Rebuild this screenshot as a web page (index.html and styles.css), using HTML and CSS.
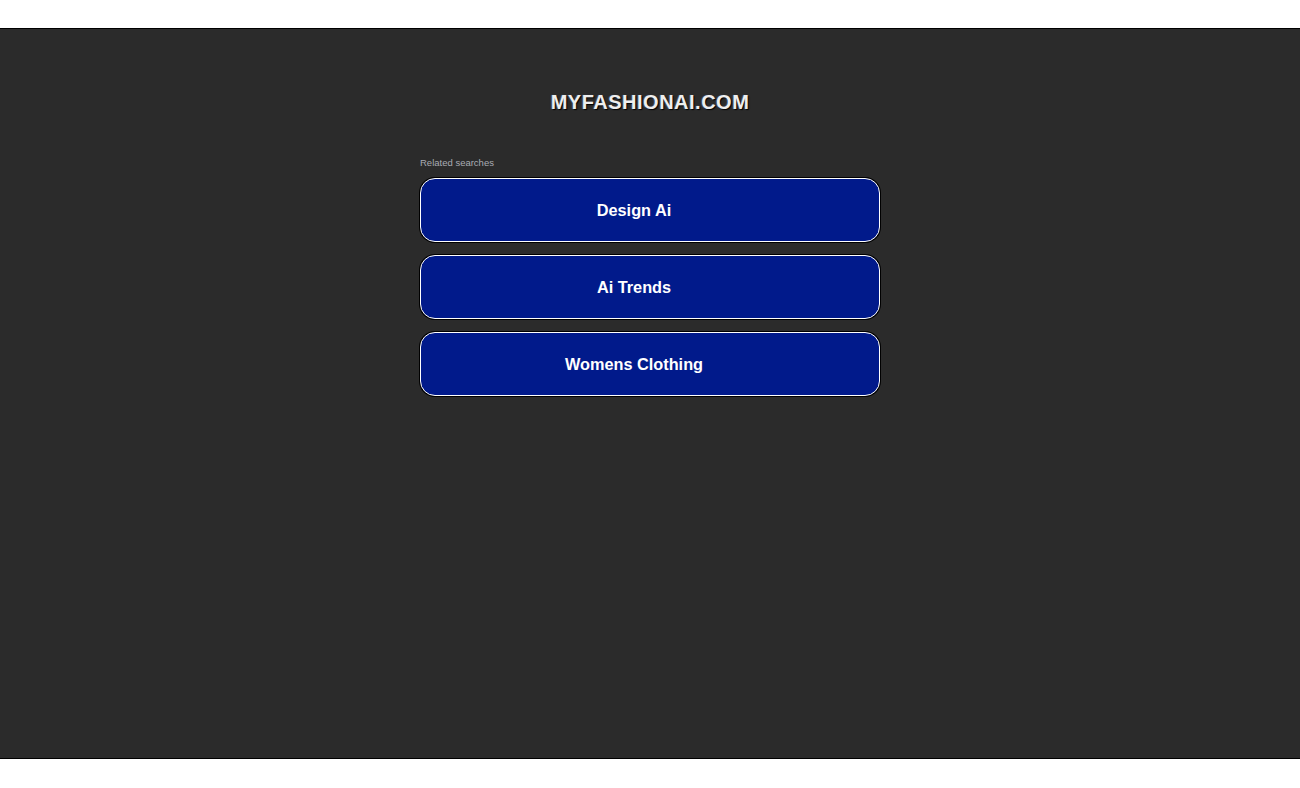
FILE: index.html
```html
<!DOCTYPE html>
<html>
<head>
<meta charset="utf-8">
<link rel="stylesheet" href="styles.css">
</head>
<body>
<div class="top-gap"></div>
<main class="stage">
  <h1 class="domain">MYFASHIONAI.COM</h1>
  <section class="related">
    <div class="related-label">Related searches</div>
    <a class="search-btn" href="#">Design Ai</a>
    <a class="search-btn" href="#">Ai Trends</a>
    <a class="search-btn" href="#">Womens Clothing</a>
  </section>
</main>
</body>
</html>
```

FILE: styles.css
```css
html, body {
  margin: 0;
  padding: 0;
  background: #ffffff;
  font-family: "Liberation Sans", Arial, sans-serif;
}
.top-gap {
  height: 28px;
}
.stage {
  box-sizing: border-box;
  height: 731px;
  background: #2b2b2b;
  border-top: 1px solid #000;
  border-bottom: 1px solid #000;
  display: flex;
  flex-direction: column;
  align-items: center;
  padding-top: 61px;
}
.domain {
  margin: 0;
  font-size: 20px;
  font-weight: bold;
  letter-spacing: 0.5px;
  color: #eeeeee;
  text-shadow: 1px 1px 1px #000, -1px 0 1px rgba(120,160,255,0.35);
  line-height: 24px;
}
.related {
  width: 460px;
  margin-top: 43px;
  display: flex;
  flex-direction: column;
  gap: 13px;
}
.related-label {
  font-size: 9.5px;
  color: #a9acb3;
  line-height: 12px;
  margin-bottom: -4px;
}
.search-btn {
  box-sizing: border-box;
  height: 64px;
  display: flex;
  align-items: center;
  justify-content: center;
  padding-right: 32px;
  background: #011a8b;
  border: 1.5px solid #ffffff;
  border-radius: 15px;
  color: #ffffff;
  font-size: 16.3px;
  font-weight: bold;
  text-decoration: none;
  box-shadow: 0 0 0 1px #000;
}
```
